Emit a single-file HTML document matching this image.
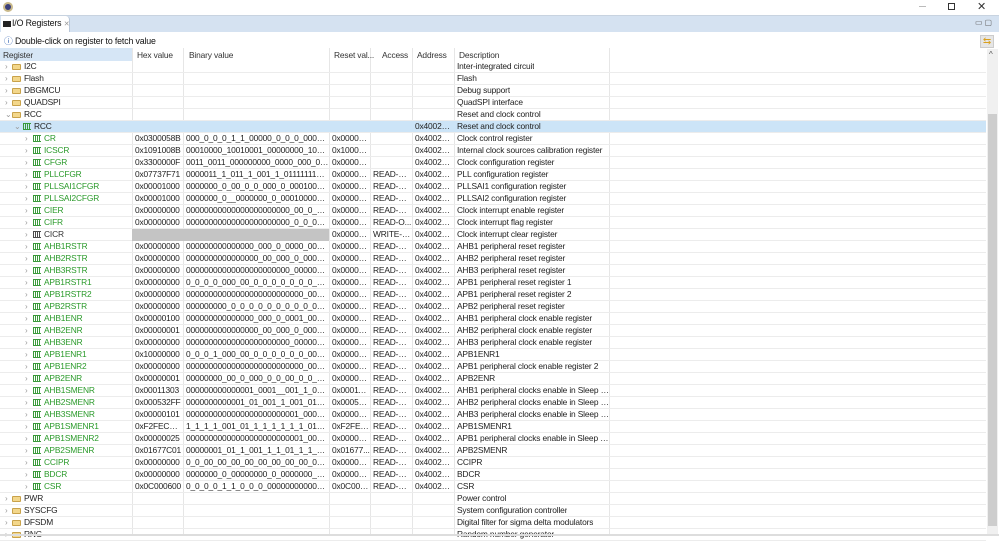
<!DOCTYPE html>
<html><head><meta charset="utf-8"><style>
*{margin:0;padding:0;box-sizing:border-box}
body{width:999px;height:536px;background:#fff;font-family:"Liberation Sans",sans-serif;font-size:8.4px;letter-spacing:-0.15px;color:#222;position:relative;overflow:hidden}
.a{position:absolute;white-space:nowrap;overflow:hidden}
.row{position:absolute;left:0;width:986px;height:12px;border-bottom:1px solid #ececec}
.c{position:absolute;top:0;height:12px;line-height:11px;white-space:nowrap;overflow:hidden;text-overflow:ellipsis;padding-left:1px}
.v{position:absolute;top:48px;width:1px;height:488px;background:#e6e6e6}
.g{color:#2a9a2a}
.exp{position:absolute;top:0;font-size:8px;color:#999;line-height:11px}
.fold{position:absolute;top:3px;width:9px;height:6px;border:1px solid #c9a24a;background:#f3d78b;border-radius:1px}
.ric{position:absolute;top:2px;width:8px;height:7px;background:repeating-linear-gradient(90deg,#3a9a3a 0 1px,transparent 1px 2px);border-top:1px solid #3a9a3a;border-bottom:1px solid #3a9a3a}
</style></head><body>
<div class="a" style="left:3px;top:2px;width:10px;height:10px;border-radius:50%;background:#3a3f7a;border:2px solid #c9b98a"></div>
<div class="a" style="left:919px;top:6px;width:7px;height:1px;background:#bbb"></div>
<div class="a" style="left:948px;top:3px;width:7px;height:7px;border:1px solid #333"></div>
<div class="a" style="left:977px;top:0px;font-size:11px;color:#333">✕</div>
<div class="a" style="left:0;top:15px;width:999px;height:17px;background:#d5e2f1;border-top:1px solid #c8d3e0"></div>
<div class="a" style="left:1px;top:16px;width:69px;height:16px;background:#fff;border-radius:0 4px 0 0;border-right:1px solid #b8c6d8"></div>
<div class="a" style="left:3px;top:21px;width:8px;height:6px;background:#222"></div>
<div class="a" style="left:12px;top:18px;font-size:8.8px;color:#111">I/O Registers <span style="color:#999;font-size:7px">✕</span></div>
<div class="a" style="left:975px;top:18px;font-size:8px;color:#666">▭ ▢</div>
<div class="a" style="left:4px;top:34px;font-size:8.8px;color:#111"><span style="color:#2a5db0">ⓘ</span> Double-click on register to fetch value</div>
<div class="a" style="left:980px;top:35px;width:14px;height:13px;background:#e6e6e6;border:1px solid #ccc;color:#d9a020;font-size:10px;line-height:11px;text-align:center">⇆</div>
<div class="a" style="left:0;top:48px;width:132px;height:13px;background:#d6e6f6"></div>
<div class="a" style="left:987px;top:49px;width:11px;height:487px;background:#f0f0f0"></div>
<div class="a" style="left:988px;top:114px;width:9px;height:412px;background:#cdcdcd"></div>
<div class="a" style="left:989px;top:50px;font-size:8px;color:#555">^</div>
<div id="t"></div>
<script>
var H=[[0,'Register'],[134,'Hex value'],[186,'Binary value'],[331,'Reset val...'],[379,'Access'],[414,'Address'],[456,'Description']];
var s='';
[132,183,329,370,412,454,609].forEach(function(x){s+='<div class="v" style="left:'+x+'px"></div>'});
H.forEach(function(h){s+='<div class="a" style="left:'+(h[0]+3)+'px;top:50px;color:#333">'+h[1]+'</div>'});
var F=[['I2C','Inter-integrated circuit'],['Flash','Flash'],['DBGMCU','Debug support'],['QUADSPI','QuadSPI interface'],['RCC','Reset and clock control',1]];
var R=[
['CR','0x0300058B','000_0_0_0_1_1_00000_0_0_0_00000_1_0_...','0x000000...','','Clock control register'],
['ICSCR','0x1091008B','00010000_10010001_00000000_100010...','0x100000...','','Internal clock sources calibration register'],
['CFGR','0x3300000F','0011_0011_000000000_0000_000_0000_...','0x000000...','','Clock configuration register'],
['PLLCFGR','0x07737F71','0000011_1_011_1_001_1_01111111_01...','0x000010...','READ-W...','PLL configuration register'],
['PLLSAI1CFGR','0x00001000','0000000_0_00_0_0_000_0_00010000_00...','0x000010...','READ-W...','PLLSAI1 configuration register'],
['PLLSAI2CFGR','0x00001000','0000000_0__0000000_0_00010000_0000...','0x000010...','READ-W...','PLLSAI2 configuration register'],
['CIER','0x00000000','00000000000000000000000_00_0_0__0_...','0x000000...','READ-W...','Clock interrupt enable register'],
['CIFR','0x00000000','00000000000000000000000_0_0_0_0__0...','0x000000...','READ-O...','Clock interrupt flag register'],
['CICR','','','0x000000...','WRITE-O...','Clock interrupt clear register',1],
['AHB1RSTR','0x00000000','000000000000000_000_0_0000_00000...','0x000000...','READ-W...','AHB1 peripheral reset register'],
['AHB2RSTR','0x00000000','0000000000000000_00_000_0_00000__0...','0x000000...','READ-W...','AHB2 peripheral reset register'],
['AHB3RSTR','0x00000000','00000000000000000000000_00000000','0x000000...','READ-W...','AHB3 peripheral reset register'],
['APB1RSTR1','0x00000000','0_0_0_0_000_00_0_0_0_0_0_0_0_0_0_00_...','0x000000...','READ-W...','APB1 peripheral reset register 1'],
['APB1RSTR2','0x00000000','00000000000000000000000000_000_00','0x000000...','READ-W...','APB1 peripheral reset register 2'],
['APB2RSTR','0x00000000','000000000_0_0_0_0_0_0_0_0_0_0_0_0_0...','0x000000...','READ-W...','APB2 peripheral reset register'],
['AHB1ENR','0x00000100','000000000000000_000_0_0001_00000...','0x000001...','READ-W...','AHB1 peripheral clock enable register'],
['AHB2ENR','0x00000001','0000000000000000_00_000_0_00000_0...','0x000000...','READ-W...','AHB2 peripheral clock enable register'],
['AHB3ENR','0x00000000','00000000000000000000000_00000000','0x000000...','READ-W...','AHB3 peripheral clock enable register'],
['APB1ENR1','0x10000000','0_0_0_1_000_00_0_0_0_0_0_0_00__0_0_0...','0x000000...','READ-W...','APB1ENR1'],
['APB1ENR2','0x00000000','00000000000000000000000000_000_00','0x000000...','READ-W...','APB1 peripheral clock enable register 2'],
['APB2ENR','0x00000001','00000000_00_0_000_0_0_00_0_0_0_0_0_...','0x000000...','READ-W...','APB2ENR'],
['AHB1SMENR','0x00011303','000000000000001_0001__001_1_00000...','0x000113...','READ-W...','AHB1 peripheral clocks enable in Sleep an...'],
['AHB2SMENR','0x000532FF','0000000000001_01_001_1_001_01__1_...','0x000532...','READ-W...','AHB2 peripheral clocks enable in Sleep an...'],
['AHB3SMENR','0x00000101','0000000000000000000000001_00000001','0x000001...','READ-W...','AHB3 peripheral clocks enable in Sleep an...'],
['APB1SMENR1','0xF2FECA3F','1_1_1_1_001_01_1_1_1_1_1_1_01__1_001...','0xF2FEC...','READ-W...','APB1SMENR1'],
['APB1SMENR2','0x00000025','00000000000000000000000001_001_01','0x000000...','READ-W...','APB1 peripheral clocks enable in Sleep an...'],
['APB2SMENR','0x01677C01','00000001_01_1_001_1_1_01_1_1_1_1_00...','0x01677...','READ-W...','APB2SMENR'],
['CCIPR','0x00000000','0_0_00_00_00_00_00_00_00_00_00_00_0...','0x000000...','READ-W...','CCIPR'],
['BDCR','0x00000000','0000000_0_00000000_0_0000000_00_0_...','0x000000...','READ-W...','BDCR'],
['CSR','0x0C000600','0_0_0_0_1_1_0_0_0_000000000000110_0...','0x0C000...','READ-W...','CSR']];
var y=61;
function row(inner,bg){s+='<div class="row" style="top:'+y+'px;'+(bg?'background:'+bg:'')+'">'+inner+'</div>';y+=12;}
F.forEach(function(f){row('<span class="exp" style="left:5px">'+(f[2]?'⌄':'›')+'</span><span class="fold" style="left:12px"></span><span class="c" style="left:23px">'+f[0]+'</span><span class="c" style="left:456px">'+f[1]+'</span>');});
row('<span class="exp" style="left:14px">⌄</span><span class="ric" style="left:23px"></span><span class="c" style="left:33px">RCC</span><span class="c" style="left:414px;width:40px">0x400210...</span><span class="c" style="left:456px">Reset and clock control</span>','#cce4f7');
R.forEach(function(r){var gr=r[6];row('<span class="exp" style="left:25px">›</span><span class="ric" style="left:33px;'+(gr?'filter:grayscale(1) brightness(0.6)':'')+'"></span><span class="c '+(gr?'':'g')+'" style="left:43px;'+(gr?'color:#333':'')+'">'+r[0]+'</span>'+(gr?'<span class="c" style="left:132px;width:197px;background:#c4c4c4"></span>':'<span class="c" style="left:134px;width:49px">'+r[1]+'</span><span class="c" style="left:185px;width:144px">'+r[2]+'</span>')+'<span class="c" style="left:331px;width:39px">'+r[3]+'</span><span class="c" style="left:372px;width:40px">'+r[4]+'</span><span class="c" style="left:414px;width:40px">0x400210...</span><span class="c" style="left:456px;width:153px">'+r[5]+'</span>');});
[['PWR','Power control'],['SYSCFG','System configuration controller'],['DFSDM','Digital filter for sigma delta modulators'],['RNG','Random number generator']].forEach(function(f){row('<span class="exp" style="left:5px">›</span><span class="fold" style="left:12px"></span><span class="c" style="left:23px">'+f[0]+'</span><span class="c" style="left:456px">'+f[1]+'</span>');});
document.getElementById('t').innerHTML=s;
</script>
<div class="a" style="left:0;top:534px;width:999px;height:2px;background:#ddd"></div>
</body></html>
